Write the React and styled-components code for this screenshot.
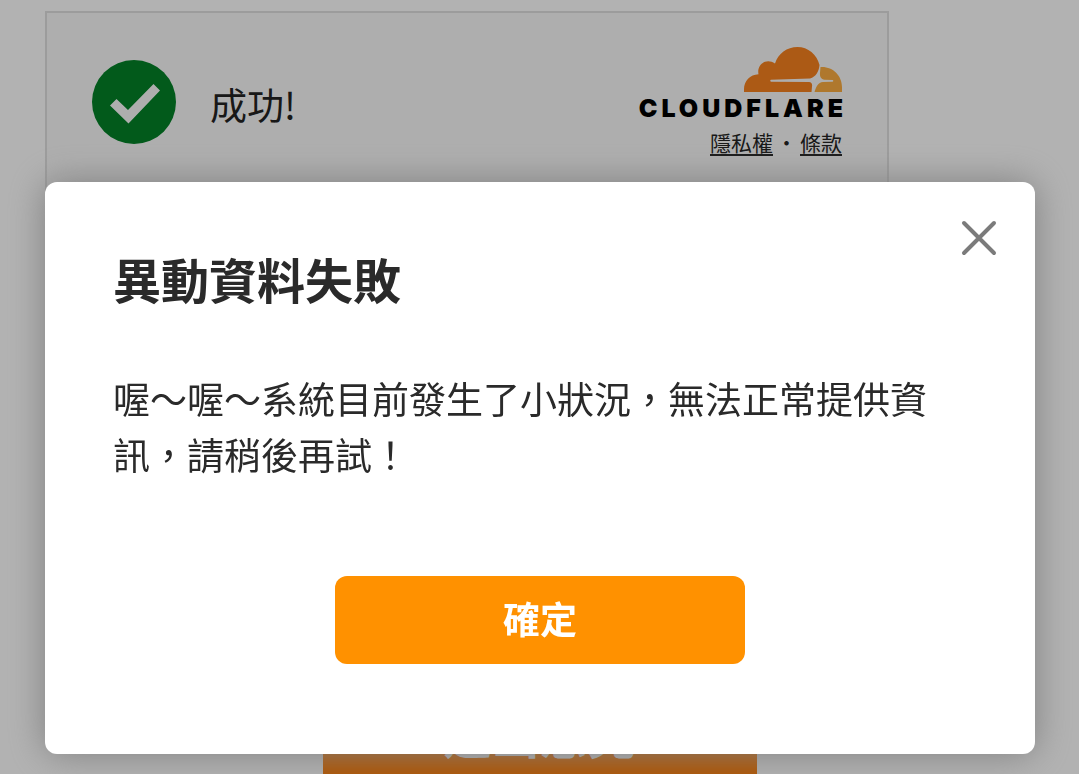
import styled, { createGlobalStyle } from "styled-components";

const GlobalStyle = createGlobalStyle`
  * {
    box-sizing: border-box;
  }

  body {
    margin: 0;
    overflow: hidden;
    background: #fff;
    color: #2a2a2a;
    font-family: "Noto Sans CJK TC", sans-serif;
  }
`;

const Page = styled.main`
  min-height: 100vh;
  padding: 11px 45px 0;
  display: flex;
  flex-direction: column;
  justify-content: space-between;
`;

const Turnstile = styled.section`
  width: 100%;
  max-width: 844px;
  height: 190px;
  padding: 34px 45px;
  display: flex;
  align-items: flex-start;
  justify-content: space-between;
  background: #fafafa;
  border: 2px solid #e0e0e0;

  .status {
    margin-top: 13px;
    display: flex;
    align-items: center;
    gap: 34px;
    font-size: 37px;
    color: #232323;
  }

  .label {
    padding-top: 3px;
  }

  .brand {
    display: flex;
    flex-direction: column;
    align-items: flex-end;
  }

  .links {
    margin-top: 3px;
    display: flex;
    gap: 3px;
    font-size: 21px;
    line-height: 32px;
    color: #232323;
  }

  a {
    color: inherit;
    text-underline-offset: 3px;
  }
`;

const Wordmark = styled.span`
  margin: 1px -5px 0 0;
  font-family: Inter, sans-serif;
  font-size: 25px;
  font-weight: 900;
  line-height: 30px;
  letter-spacing: 4px;
  color: #000;
`;

const SubmitButton = styled.button`
  align-self: center;
  width: 434px;
  height: 90px;
  padding: 8px 0 0;
  border: 0;
  background: #fa7800;
  color: #fff;
  font-family: inherit;
  font-size: 48px;
  font-weight: 700;
  line-height: 60px;
`;

const Overlay = styled.div`
  position: fixed;
  inset: 0;
  padding: 182px 44px 20px 45px;
  background: rgba(0, 0, 0, 0.3);
`;

const Dialog = styled.div`
  position: relative;
  padding: 60px 68px 90px;
  display: flex;
  flex-direction: column;
  background: #fff;
  border-radius: 12px;
  box-shadow: 0 0 36px #7f7f7f;

  h1 {
    margin: 0;
    font-size: 48px;
    font-weight: 700;
    line-height: 72px;
  }

  p {
    margin: 56px 12px 0 0;
    font-size: 37px;
    line-height: 56px;
  }
`;

const CloseButton = styled.button`
  position: absolute;
  top: 36px;
  right: 36px;
  padding: 0;
  border: 0;
  background: none;
  cursor: pointer;

  svg {
    display: block;
  }
`;

const ConfirmButton = styled.button`
  align-self: center;
  width: 410px;
  max-width: 100%;
  height: 88px;
  margin-top: 94px;
  padding: 0 0 4px;
  border: 0;
  border-radius: 12px;
  background: #ff9100;
  color: #fff;
  font-family: inherit;
  font-size: 37px;
  font-weight: 700;
  cursor: pointer;
`;

const SuccessIcon = () => (
  <svg width="84" height="84" viewBox="0 0 84 84" aria-hidden="true">
    <circle cx="42" cy="42" r="42" fill="#038127" />
    <path d="M18 45.500l6.500-6.500L36 50l25.500-26 6.500 6.500L36.500 63.500z" fill="#fafafa" />
  </svg>
);

const CloudLogo = () => (
  <svg width="98" height="45" viewBox="0 0 98 45" aria-hidden="true">
    <path
      d="M0 45v-3C0 34 6 27.500 14.500 27.200C12.500 18 22 10.500 31 16.500C34 6.500 43 0 53.500 0C64 0 73 7.500 75.500 18C75 24 72 30 66 31.500L27 32.800c-1 .2-1 1.700 0 1.900L65 35c2.500.2 3.500 2 3 4.500L67.500 45z"
      fill="#f6821f"
    />
    <path
      d="M76.500 20C88 19 98 28 98 40v5H70.500c1.500-5 3.500-9.500 8.500-10l9.500-.3c1-.2 1-1.500 0-1.700l-8-.3c-3.500-.7-5-3.200-4.500-7z"
      fill="#fbad41"
    />
  </svg>
);

const CloseIcon = () => (
  <svg width="40" height="40" viewBox="0 0 40 40" fill="none" aria-hidden="true">
    <path d="M5 5l30 30M35 5L5 35" stroke="#7b7b7b" strokeWidth="4" strokeLinecap="round" />
  </svg>
);

const App = () => {
  return (
    <>
      <GlobalStyle />
      <Page>
        <Turnstile>
          <div className="status">
            <SuccessIcon />
            <span className="label">成功!</span>
          </div>
          <div className="brand">
            <CloudLogo />
            <Wordmark>CLOUDFLARE</Wordmark>
            <div className="links">
              <a href="#privacy">隱私權</a>
              <span>•</span>
              <a href="#terms">條款</a>
            </div>
          </div>
        </Turnstile>
        <SubmitButton type="button">送出意見</SubmitButton>
      </Page>
      <Overlay>
        <Dialog role="dialog" aria-modal="true" aria-labelledby="dialog-title">
          <CloseButton type="button" aria-label="關閉">
            <CloseIcon />
          </CloseButton>
          <h1 id="dialog-title">異動資料失敗</h1>
          <p>喔～喔～系統目前發生了小狀況，無法正常提供資訊，請稍後再試！</p>
          <ConfirmButton type="button">確定</ConfirmButton>
        </Dialog>
      </Overlay>
    </>
  );
};

export default App;
